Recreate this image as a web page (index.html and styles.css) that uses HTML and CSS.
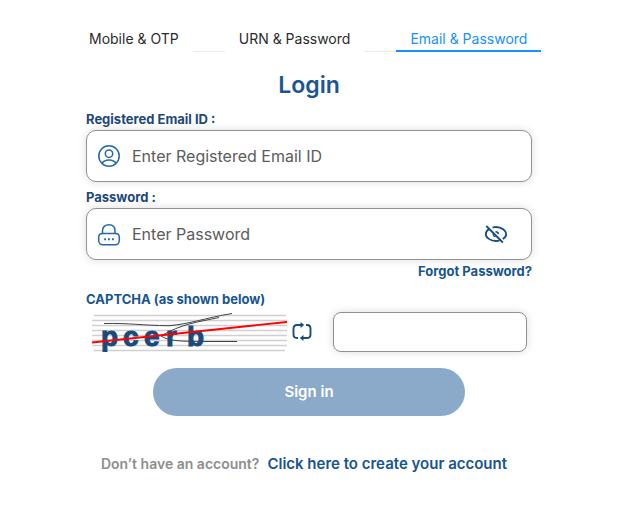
FILE: index.html
```html
<!DOCTYPE html>
<html lang="en">
<head>
<meta charset="utf-8">
<meta name="viewport" content="width=device-width, initial-scale=1">
<title>Login</title>
<link rel="stylesheet" href="styles.css">
</head>
<body>
<main class="login">
  <nav class="tabs">
    <button class="tab" type="button">Mobile &amp; OTP</button>
    <span class="tab-line"></span>
    <button class="tab" type="button">URN &amp; Password</button>
    <span class="tab-line"></span>
    <button class="tab tab-active" type="button">Email &amp; Password</button>
  </nav>
  <form class="form">
    <h1 class="title">Login</h1>
    <label class="label" for="email">Registered Email ID :</label>
    <div class="field">
      <svg class="icon" viewBox="0 0 24 24" fill="none" stroke="#2467ab" stroke-width="1.5" aria-hidden="true">
        <circle cx="12" cy="12" r="10.2"/>
        <circle cx="12" cy="9.7" r="3.7"/>
        <path d="M5 19.2C6.500 16.700 9 15.900 12 15.900s5.500.8 7 3.300"/>
      </svg>
      <input class="input" id="email" type="email" placeholder="Enter Registered Email ID">
    </div>
    <label class="label" for="password">Password :</label>
    <div class="field">
      <svg class="icon" viewBox="0 0 24 24" fill="none" stroke="#2467ab" stroke-width="1.5" aria-hidden="true">
        <path d="M5.500 11.500V8.800C5.500 5 8 2.800 12 2.800s6 2.200 6 6v2.700"/>
        <path d="M6 11.500h12c3.600 0 4.300 1 4.300 4.500v2c0 3.500-.9 4.800-4.500 4.800H6.200c-3.600 0-4.500-1.300-4.500-4.800V16c0-3.500.7-4.500 4.300-4.500z"/>
        <path d="M7.200 17.300h1.800m2 0h1.800m2.200 0h1.800" stroke-width="1.900"/>
      </svg>
      <input class="input" id="password" type="password" placeholder="Enter Password">
      <button class="eye" type="button" aria-label="Show password">
        <svg class="icon" viewBox="0 0 24 24" fill="none" stroke="#184d80" stroke-width="1.800" aria-hidden="true">
          <path d="M8.500 5.500C9.600 5.200 10.800 5 12 5c5.600 0 10.200 3.800 10.200 7.200 0 1.800-1.300 3.500-3.300 4.800M5 7C3 8.500 1.800 10.400 1.800 12.200 1.800 15.600 6.600 19 12 19c1.200 0 2.500-.2 3.600-.6"/>
          <path d="M11.500 9.700c1.700 0 2.800.8 3 2.500" stroke-width="1.500"/>
          <path d="M9.200 11.700c-.4 1.700.7 3 2.400 3" stroke-width="1.100"/>
          <path d="M2.300 4l16.500 16.500"/>
        </svg>
      </button>
    </div>
    <a class="forgot" href="#">Forgot Password?</a>
    <label class="label label-captcha" for="captcha">CAPTCHA (as shown below)</label>
    <div class="captcha">
      <svg class="captcha-image" viewBox="0 0 196 40" role="img" aria-label="Captcha">
        <path d="M2 3.500h192M0 8.500h195M0 13.500h195M0 18.500h195M0 23.500h195M0 28.500h195M0 33.500h195M2 38.500h191" stroke="#d0d0d0" stroke-width="1.300"/>
        <text class="captcha-text" x="9 31 52 74 95" y="34">pcerb</text>
        <path d="M12 11.500c25-.6 38 2 65 2.200C98 12 113 6 140 1.500M69 24c20-12 37-14 58-18.500M69 24c10 6 20 5.500 76 5.500" fill="none" stroke="#444" stroke-width="1"/>
        <path d="M0 30.500L195 10" stroke="#f00" stroke-width="1.800"/>
      </svg>
      <button class="refresh" type="button" aria-label="Refresh captcha">
        <svg class="refresh-icon" viewBox="0 0 20 20" fill="none" stroke="#184d80" stroke-width="1.900" aria-hidden="true">
          <path d="M6 16H5c-2.500 0-3.500-1-3.500-3.500V6.500C1.500 4 2.500 3 5 3h6"/>
          <path d="M14 3h1c2.500 0 3.500 1 3.500 3.500v6c0 2.500-1 3.500-3.500 3.500H9"/>
          <path d="M8.500 0l3.700 3-3.700 3zM11.500 13l-3.700 3 3.700 3z" fill="#184d80" stroke="none"/>
        </svg>
      </button>
      <input class="captcha-input" id="captcha" type="text">
    </div>
    <button class="submit" type="button">Sign in</button>
    <p class="signup">
      <span class="question">Don’t have an account?</span>
      <a class="create" href="#">Click here to create your account</a>
    </p>
  </form>
</main>
</body>
</html>
```
FILE: styles.css
```css
* {
  box-sizing: border-box;
}

body {
  margin: 0;
  background: #fff;
  font-family: Inter, sans-serif;
}

button {
  border: 0;
  padding: 0;
  background: none;
  font-family: inherit;
}

a {
  text-decoration: none;
}

.login {
  max-width: 468px;
  margin: 0 auto;
  padding-top: 28px;
}

.tabs {
  display: flex;
  align-items: flex-end;
}

.tab {
  height: 24px;
  padding: 0 14px 2px;
  color: #2b2b2b;
  font-size: 14px;
  line-height: 22px;
  white-space: nowrap;
}

.tab-active {
  padding-bottom: 0;
  border-bottom: 2px solid #1890ff;
  color: #1890ff;
}

.tab-line {
  width: 32px;
  border-bottom: 1px solid #ececec;
}

.form {
  display: flex;
  flex-direction: column;
  padding: 0 11px;
}

.title {
  margin: 17px 0 9px;
  color: #1b5693;
  font-size: 23px;
  font-weight: 600;
  line-height: 32px;
  text-align: center;
}

.label {
  margin-bottom: 2px;
  color: #204878;
  font-size: 13px;
  font-weight: 700;
  line-height: 18px;
}

.field {
  display: flex;
  align-items: center;
  height: 52px;
  margin-bottom: 6px;
  padding: 0 23px 0 10px;
  border: 1px solid #919191;
  border-radius: 10px;
  background: #fff;
  box-shadow: 0 0 8px rgba(0, 0, 0, 0.14);
}

.icon {
  display: block;
  flex: none;
  width: 24px;
  height: 24px;
}

.input {
  flex: 1;
  min-width: 0;
  margin-left: 11px;
  padding: 0;
  border: 0;
  outline: 0;
  background: none;
  color: #333;
  font-family: inherit;
  font-size: 16px;
  line-height: 24px;
}

.input::placeholder {
  color: #5c5c5c;
  opacity: 1;
}

.forgot {
  align-self: flex-end;
  margin-top: -4px;
  color: #165591;
  font-size: 13px;
  font-weight: 700;
  line-height: 18px;
}

.label-captcha {
  margin-top: 10px;
  color: #165591;
}

.captcha {
  display: flex;
  align-items: center;
  margin: 2px 5px 0 6px;
}

.captcha-image {
  display: block;
  flex: none;
  width: 196px;
  height: 40px;
}

.captcha-text {
  fill: #174b7d;
  stroke: #174b7d;
  stroke-width: 1px;
  font-family: "Liberation Sans", sans-serif;
  font-size: 28px;
  font-weight: 700;
}

.refresh {
  margin: 0 21px 0 4px;
}

.refresh-icon {
  display: block;
  width: 20px;
  height: 20px;
}

.captcha-input {
  flex: 1;
  min-width: 0;
  height: 40px;
  padding: 0 12px;
  border: 1px solid #919191;
  border-radius: 8px;
  background: #fff;
  box-shadow: 0 0 8px rgba(0, 0, 0, 0.14);
  font-family: inherit;
  font-size: 16px;
}

.submit {
  align-self: center;
  width: 70%;
  height: 48px;
  margin-top: 16px;
  padding-bottom: 2px;
  border-radius: 24px;
  background: #8ba9c8;
  color: #fff;
  font-size: 15px;
  font-weight: 600;
}

.signup {
  display: flex;
  justify-content: center;
  align-items: center;
  gap: 8px;
  margin: 37px 0 0;
  padding-right: 10px;
  line-height: 22px;
  white-space: nowrap;
}

.question {
  color: #8e8e8e;
  font-size: 14px;
  font-weight: 600;
}

.create {
  color: #165591;
  font-size: 15px;
  font-weight: 600;
}
```
